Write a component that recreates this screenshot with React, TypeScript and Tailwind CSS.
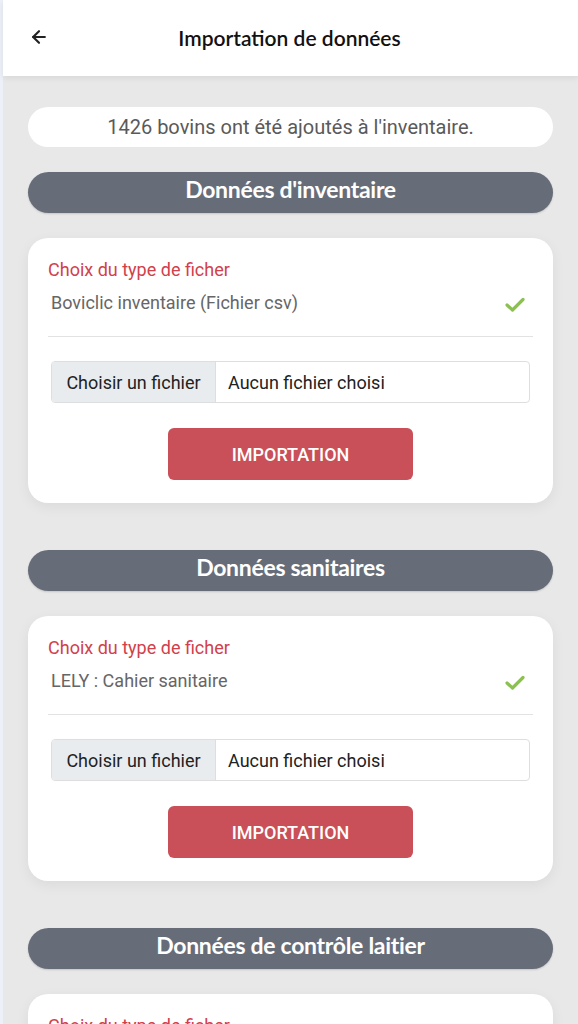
import { ArrowLeft } from "lucide-react";

const sections = [
  { title: "Données d'inventaire", type: "Boviclic inventaire (Fichier csv)" },
  { title: "Données sanitaires", type: "LELY : Cahier sanitaire" },
  { title: "Données de contrôle laitier", type: "LELY : Contrôle laitier" },
];

function Check() {
  return (
    <svg width="20" height="16" viewBox="0 0 20 16">
      <path d="M2 9 L7.5 14 L18 3.5" fill="none" stroke="#8cc152" strokeWidth="3.2" strokeLinecap="round" strokeLinejoin="round" />
    </svg>
  );
}

function ImportCard({ type }: { type: string }) {
  return (
    <div className="bg-white rounded-[20px] shadow-[0_4px_14px_rgba(0,0,0,0.06)] px-5 pt-[21px] pb-[23px]">
      <div className="text-[18px] leading-[22px] text-[#d2404c]">Choix du type de ficher</div>
      <div className="flex items-center justify-between pl-[3px] pr-[8px] mt-[11px]">
        <span className="text-[18px] leading-[22px] text-[#666]">{type}</span>
        <span className="mt-[2px]"><Check /></span>
      </div>
      <div className="border-b border-[#e2e2e2] mt-[22px]" />
      <div className="flex mx-[3px] mt-[24px] h-[42px] border border-[#dedede] rounded-[4px] overflow-hidden text-[18px] text-[#222]">
        <div className="bg-[#e9ecef] border-r border-[#dedede] w-[164px] flex items-center justify-center">Choisir un fichier</div>
        <div className="flex items-center pl-[12px]">Aucun fichier choisi</div>
      </div>
      <div className="flex justify-center mt-[25px]">
        <button className="w-[245px] h-[52px] bg-[#c94f58] rounded-[6px] text-white text-[18px] font-medium">IMPORTATION</button>
      </div>
    </div>
  );
}

export default function App() {
  return (
    <div className="min-h-[1024px] bg-[#e8e8e8] border-l-[3px] border-[#edf0f6]" style={{ fontFamily: "Roboto, sans-serif" }}>
      <div className="bg-white h-[76px] flex items-center relative shadow-[0_2px_6px_rgba(0,0,0,0.08)]">
        <ArrowLeft className="absolute left-[26px] top-[27px]" size={20} strokeWidth={2.6} color="#222" />
        <div className="w-full text-center text-[21px] font-semibold text-[#111] pr-[2px]" style={{ fontFamily: "Lato, sans-serif" }}>Importation de données</div>
      </div>
      <div className="px-[25px] pt-[31px] flex flex-col">
        <div className="bg-white rounded-full h-[40px] flex items-center justify-center text-[20px] text-[#5a5a5a]">1426 bovins ont été ajoutés à l'inventaire.</div>
        {sections.map((s, i) => (
          <div key={s.title} className={i === 0 ? "mt-[25px]" : "mt-[47px]"}>
            <div className="bg-[#676d78] rounded-full h-[41px] flex items-center justify-center text-white text-[23px] font-bold pb-[7px] tracking-[-0.3px] shadow-[0_1px_2px_rgba(0,0,0,0.15)]" style={{ fontFamily: "Lato, sans-serif" }}>{s.title}</div>
            <div className="mt-[25px]">
              <ImportCard type={s.type} />
            </div>
          </div>
        ))}
      </div>
    </div>
  );
}
